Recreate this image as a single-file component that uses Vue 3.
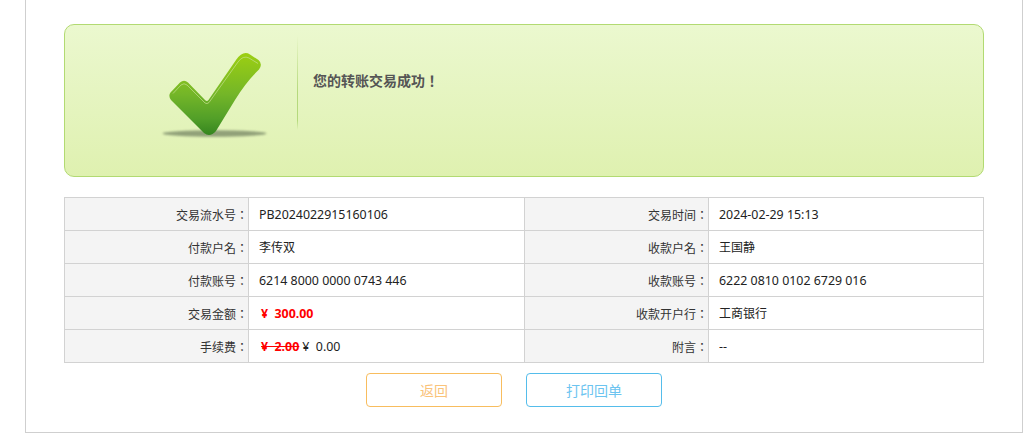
<script setup>
const rows = [
  { l1: '交易流水号：', v1: 'PB2024022915160106', l2: '交易时间：', v2: '2024-02-29 15:13' },
  { l1: '付款户名：', v1: '李传双', l2: '收款户名：', v2: '王国静' },
  { l1: '付款账号：', v1: '6214 8000 0000 0743 446', l2: '收款账号：', v2: '6222 0810 0102 6729 016' },
  { l1: '交易金额：', amount: '¥  300.00', l2: '收款开户行：', v2: '工商银行' },
  { l1: '手续费：', fee: '¥  2.00', feeNow: '¥  0.00', l2: '附言：', v2: '--' }
]
const isCjk = (text) => /[\u4e00-\u9fff]/.test(text)
</script>

<template>
  <div class="page">
    <section class="banner">
      <div class="banner-icon">
        <svg width="232" height="151" viewBox="65 25 232 151" aria-hidden="true">
          <defs>
            <linearGradient id="tickFill" x1="0" y1="0" x2="0" y2="1">
              <stop offset="0" stop-color="#9ccf12" />
              <stop offset="0.5" stop-color="#74b628" />
              <stop offset="0.8" stop-color="#529f28" />
              <stop offset="1" stop-color="#35851f" />
            </linearGradient>
            <filter id="tickBlur" x="-20%" y="-100%" width="140%" height="300%">
              <feGaussianBlur stdDeviation="1.3" />
            </filter>
          </defs>
          <ellipse cx="214.5" cy="133.5" rx="52" ry="3.2" fill="#6f7f5f" opacity="0.7" filter="url(#tickBlur)" />
          <path
            d="M170.5 92.5 L180 82.5 Q184 79 188 82.5 L205 100 Q207 102 208.5 100 L236 60 Q243 50 250 54.5 L258.5 60 Q263 64 259 69.5 Q246 82 235 100 L216 131 Q210 138 204 133 L171 100 Q168 96 170.5 92.5 Z"
            fill="url(#tickFill)"
          />
          <path
            d="M173 93.5 L181 85 Q184 82.5 187 85 L205 103 Q207 104.5 209 102.5 L238 62 Q243 55 249 58 L258 63.5"
            fill="none"
            stroke="#c4e08e"
            stroke-width="1"
            opacity="0.7"
          />
        </svg>
      </div>
      <div class="divider"></div>
      <p class="message">您的转账交易成功！</p>
    </section>

    <div class="info-grid">
      <template v-for="row in rows" :key="row.l1">
        <div class="cell label">{{ row.l1 }}</div>
        <div class="cell value" :class="{ cjk: row.v1 && isCjk(row.v1) }">
          <template v-if="row.amount"><span class="red">{{ row.amount }}</span></template>
          <template v-else-if="row.fee"><s class="red">{{ row.fee }}</s><span class="now">{{ row.feeNow }}</span></template>
          <template v-else>{{ row.v1 }}</template>
        </div>
        <div class="cell label">{{ row.l2 }}</div>
        <div class="cell value" :class="{ cjk: isCjk(row.v2) }">{{ row.v2 }}</div>
      </template>
    </div>

    <div class="actions">
      <button type="button" class="btn back">返回</button>
      <button type="button" class="btn print">打印回单</button>
    </div>
  </div>
</template>

<style>
html, body { margin: 0; background: #fff; overflow: hidden; }
</style>

<style scoped>
.page {
  box-sizing: border-box;
  width: 998px;
  height: 433px;
  margin-left: 25px;
  padding: 24px 38px 0;
  border: 1px solid #cfcfcf;
  border-top: 0;
  font-family: "Noto Sans", "Noto Sans CJK TC", sans-serif;
}
.banner {
  box-sizing: border-box;
  display: flex;
  height: 153px;
  border: 1px solid #b2da72;
  border-radius: 10px;
  background: linear-gradient(#ebf8cf, #dff1b0);
}
.banner-icon {
  flex: none;
  width: 232px;
  height: 151px;
  display: flex;
}
.divider {
  flex: none;
  width: 1px;
  height: 95px;
  margin-top: 10px;
  background: linear-gradient(rgba(178, 218, 114, 0), #b5d97c 60%, #b5d97c 90%, rgba(178, 218, 114, 0));
}
.message {
  margin: 45px 0 0 15px;
  font-family: "Noto Sans CJK TC", sans-serif;
  font-size: 14px;
  line-height: 20px;
  font-weight: 700;
  color: #555;
}
.info-grid {
  box-sizing: border-box;
  display: grid;
  grid-template-columns: 184px 276px 184px 275px;
  grid-auto-rows: 33px;
  margin-top: 20px;
  border-top: 1px solid #d2d2d2;
  border-left: 1px solid #d2d2d2;
}
.cell {
  box-sizing: border-box;
  display: flex;
  align-items: center;
  border-right: 1px solid #d2d2d2;
  border-bottom: 1px solid #d2d2d2;
  font-size: 12px;
  color: #222;
}
.label {
  justify-content: flex-end;
  background: #f4f4f4;
  font-family: "Noto Sans CJK TC", sans-serif;
  color: #333;
}
.value {
  padding-left: 10px;
  font-size: 12.4px;
  white-space: pre;
}
.value.cjk {
  font-size: 12px;
}
.red {
  font-weight: 700;
  color: #f00;
  margin-left: 2px;
}
.now {
  margin-left: 3px;
}
.actions {
  display: flex;
  gap: 24px;
  margin-top: 10px;
  padding-left: 302px;
}
.btn {
  box-sizing: border-box;
  width: 136px;
  height: 34px;
  padding: 0;
  background: #fff;
  border: 1px solid;
  border-radius: 4px;
  font-family: "Noto Sans CJK SC", sans-serif;
  font-size: 14px;
}
.back { border-color: #f8bd5e; color: #fac37a; }
.print { border-color: #55bdeb; color: #6cc4f0; }
</style>
